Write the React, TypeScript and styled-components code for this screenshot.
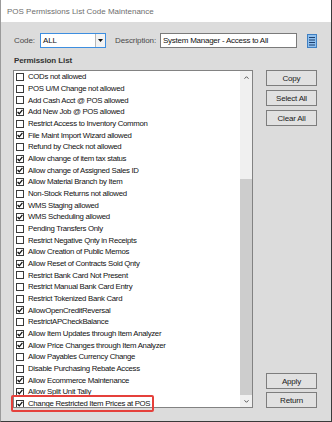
import React from 'react';
import styled, { createGlobalStyle } from 'styled-components';

const Global = createGlobalStyle`
  html, body { margin: 0; padding: 0; background: #dcdcdc; }
  body { font-family: "Liberation Sans", Arial, sans-serif; }
  * { box-sizing: border-box; }
`;

const Window = styled.div`
  width: 332px;
  height: 422px;
  background: #dcdcdc;
  border-left: 1px solid #9a9a9a;
  border-right: 1px solid #3a3a3a;
  border-bottom: 1px solid #3a3a3a;
  display: flex;
  flex-direction: column;
  overflow: hidden;
`;

const TitleBar = styled.div`
  height: 22px;
  flex: none;
  background: #ffffff;
  display: flex;
  align-items: center;
  padding-left: 6px;
  font-size: 8px;
  color: #6e6e6e;
`;

const Content = styled.div`
  flex: 1;
  padding: 11px 0 0 12px;
  display: flex;
  flex-direction: column;
`;

const HeaderRow = styled.div`
  display: flex;
  align-items: center;
  height: 15px;
`;

const FieldLabel = styled.span<{ $w: number; $ml?: number }>`
  width: ${p => p.$w}px;
  margin-left: ${p => p.$ml ?? 0}px;
  font-size: 8px;
  letter-spacing: -0.1px;
  color: #4a4a4a;
  padding-left: 1px;
  white-space: nowrap;
`;

const Combo = styled.div`
  width: 66px;
  height: 15px;
  background: #fff;
  border: 1px solid #3d8ee0;
  display: flex;
  align-items: center;
`;

const ComboText = styled.span`
  flex: 1;
  font-size: 8px;
  letter-spacing: -0.2px;
  color: #111;
  padding-left: 2px;
`;

const ComboArrow = styled.div`
  width: 10px;
  height: 100%;
  border-left: 1px solid #b8b8b8;
  background: #f3f3f3;
  display: flex;
  align-items: center;
  justify-content: center;
`;

const TextInput = styled.div`
  width: 137px;
  height: 15px;
  background: #fff;
  border: 1px solid #7a7a7a;
  font-size: 8px;
  letter-spacing: -0.25px;
  color: #111;
  padding-left: 2px;
  display: flex;
  align-items: center;
  white-space: nowrap;
`;

const IconBtn = styled.div`
  margin-left: 10px;
  width: 10px;
  height: 14px;
  display: flex;
`;

const Main = styled.div`
  margin-top: 8px;
  display: grid;
  grid-template-columns: 240px 51px;
  grid-template-rows: 14px 338px;
  column-gap: 13px;
`;

const SectionLabel = styled.div`
  font-size: 8px;
  font-weight: bold;
  letter-spacing: -0.1px;
  color: #333;
  padding-left: 1px;
  line-height: 10px;
`;

const ListWrap = styled.div`
  position: relative;
  grid-column: 1;
  grid-row: 2;
`;

const ListBox = styled.div`
  width: 100%;
  height: 100%;
  background: #fff;
  border: 1px solid #828282;
  display: flex;
  overflow: hidden;
`;

const Items = styled.div`
  flex: 1;
  overflow: hidden;
`;

const Item = styled.div`
  height: 11.68px;
  display: flex;
  align-items: center;
  padding-left: 2px;
  gap: 4px;
  font-size: 7.8px;
  letter-spacing: -0.3px;
  color: #111;
  white-space: nowrap;
`;

const Box = styled.span`
  width: 8px;
  height: 8px;
  flex: none;
  border: 1px solid #3a3a3a;
  background: #fff;
  display: flex;
`;

const Highlight = styled.div`
  position: absolute;
  left: -2px;
  top: 325px;
  width: 143px;
  height: 17px;
  border: 2px solid #e5403b;
  border-radius: 2px;
  pointer-events: none;
`;

const ScrollBar = styled.div`
  width: 12px;
  flex: none;
  background: #f0f0f0;
  display: flex;
  flex-direction: column;
`;

const ScrollArrow = styled.div`
  height: 12px;
  flex: none;
  display: flex;
  align-items: center;
  justify-content: center;
`;

const ScrollTrack = styled.div<{ $h: number }>`
  height: ${p => p.$h}px;
  flex: none;
`;

const ScrollThumb = styled.div`
  flex: 1;
  background: #cdcdcd;
`;

const ButtonCol = styled.div`
  grid-column: 2;
  grid-row: 2;
  display: flex;
  flex-direction: column;
  gap: 4px;
`;

const Button = styled.div`
  height: 16px;
  flex: none;
  background: #e1e1e1;
  border: 1px solid #7d7d7d;
  display: flex;
  align-items: center;
  justify-content: center;
  font-size: 8px;
  letter-spacing: -0.2px;
  color: #222;
`;

const BottomGroup = styled.div`
  margin-top: auto;
  display: flex;
  flex-direction: column;
  gap: 3px;
`;

const permissions: [string, boolean][] = [
  ['CODs not allowed', false],
  ['POS U/M Change not allowed', false],
  ['Add Cash Acct @ POS allowed', false],
  ['Add New Job @ POS allowed', true],
  ['Restrict Access to Inventory Common', false],
  ['File Maint Import Wizard allowed', true],
  ['Refund by Check not allowed', false],
  ['Allow change of item tax status', true],
  ['Allow change of Assigned Sales ID', true],
  ['Allow Material Branch by Item', true],
  ['Non-Stock Returns not allowed', false],
  ['WMS Staging allowed', true],
  ['WMS Scheduling allowed', true],
  ['Pending Transfers Only', false],
  ['Restrict Negative Qnty in Receipts', false],
  ['Allow Creation of Public Memos', true],
  ['Allow Reset of Contracts Sold Qnty', true],
  ['Restrict Bank Card Not Present', false],
  ['Restrict Manual Bank Card Entry', false],
  ['Restrict Tokenized Bank Card', false],
  ['AllowOpenCreditReversal', true],
  ['RestrictAPCheckBalance', false],
  ['Allow Item Updates through Item Analyzer', true],
  ['Allow Price Changes through Item Analyzer', true],
  ['Allow Payables Currency Change', false],
  ['Disable Purchasing Rebate Access', false],
  ['Allow Ecommerce Maintenance', true],
  ['Allow Split Unit Tally', true],
  ['Change Restricted Item Prices at POS', true],
];

const Check = () => (
  <svg width="6" height="6" viewBox="0 0 6 6">
    <path d="M0.6 3 L2.3 4.8 L5.4 0.9" fill="none" stroke="#111" strokeWidth="1.3" />
  </svg>
);

const ListIcon = () => (
  <svg width="10" height="14" viewBox="0 0 10 14">
    <rect x="0.5" y="0.5" width="9" height="13" fill="#8fc0ee" stroke="#3f7fc2" />
    <path d="M2 3.5 H8 M2 6 H8 M2 8.5 H8 M2 11 H8" stroke="#1d3f6e" strokeWidth="1" />
  </svg>
);

export default function App() {
  return (
    <>
      <Global />
      <Window>
        <TitleBar>POS Permissions List Code Maintenance</TitleBar>
        <Content>
          <HeaderRow>
            <FieldLabel $w={27}>Code:</FieldLabel>
            <Combo>
              <ComboText>ALL</ComboText>
              <ComboArrow>
                <svg width="5" height="3" viewBox="0 0 5 3">
                  <path d="M0 0 H5 L2.5 3 Z" fill="#111" />
                </svg>
              </ComboArrow>
            </Combo>
            <FieldLabel $w={46} $ml={8}>Description:</FieldLabel>
            <TextInput>System Manager - Access to All</TextInput>
            <IconBtn>
              <ListIcon />
            </IconBtn>
          </HeaderRow>
          <Main>
            <SectionLabel>Permission List</SectionLabel>
            <ListWrap>
              <ListBox>
                <Items>
                  {permissions.map(([label, checked]) => (
                    <Item key={label}>
                      <Box>{checked && <Check />}</Box>
                      <span>{label}</span>
                    </Item>
                  ))}
                </Items>
                <ScrollBar>
                  <ScrollArrow>
                    <svg width="5" height="3" viewBox="0 0 5 3">
                      <path d="M0.5 2.7 L2.5 0.7 L4.5 2.7" fill="none" stroke="#555" strokeWidth="1" />
                    </svg>
                  </ScrollArrow>
                  <ScrollTrack $h={96} />
                  <ScrollThumb />
                  <ScrollArrow>
                    <svg width="5" height="3" viewBox="0 0 5 3">
                      <path d="M0.5 0.3 L2.5 2.3 L4.5 0.3" fill="none" stroke="#555" strokeWidth="1" />
                    </svg>
                  </ScrollArrow>
                </ScrollBar>
              </ListBox>
              <Highlight />
            </ListWrap>
            <ButtonCol>
              <Button>Copy</Button>
              <Button>Select All</Button>
              <Button>Clear All</Button>
              <BottomGroup>
                <Button>Apply</Button>
                <Button>Return</Button>
              </BottomGroup>
            </ButtonCol>
          </Main>
        </Content>
      </Window>
    </>
  );
}
